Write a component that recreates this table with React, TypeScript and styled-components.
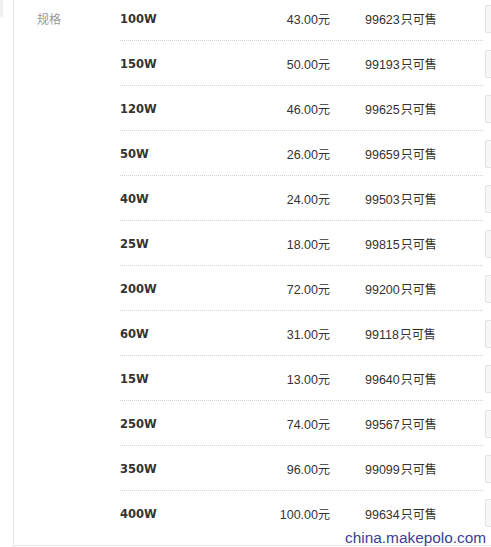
import React from "react";
import styled, { createGlobalStyle } from "styled-components";

const Global = createGlobalStyle`
  html, body { margin: 0; padding: 0; background: #fff; overflow: hidden; }
  body { font-family: "Liberation Sans", "Noto Sans CJK SC", sans-serif; color: #333; }
`;

const Page = styled.div`
  position: relative;
  display: flex;
  align-items: flex-start;
  width: 491px;
  height: 547px;
  overflow: hidden;
`;

const Stub = styled.div`
  width: 3px;
  height: 17px;
  background: #f0f0f0;
  flex: none;
`;

const Panel = styled.div`
  margin-left: 10px;
  margin-top: -4px;
  padding-bottom: 10px;
  display: flex;
  flex: none;
  width: 520px;
  border-left: 1px solid #e6e6e6;
  border-bottom: 1px solid #e6e6e6;
`;

const Label = styled.div`
  width: 83px;
  padding-left: 23px;
  padding-top: 1px;
  height: 43px;
  line-height: 44px;
  font-size: 12px;
  color: #999;
  font-family: "Noto Sans CJK SC", sans-serif;
  flex: none;
`;

const List = styled.div`
  display: flex;
  flex-direction: column;
`;

const Row = styled.div`
  display: flex;
  align-items: center;
`;

const Info = styled.div<{ $last?: boolean }>`
  display: grid;
  grid-template-columns: 130px 80px 153px;
  align-items: center;
  width: 363px;
  height: 44px;
  border-bottom: ${(p) => (p.$last ? "none" : "1px dotted #d6d6d6")};
`;

const Name = styled.span`
  font-family: "DejaVu Sans", sans-serif;
  font-weight: bold;
  font-size: 11.5px;
  color: #333;
  padding-top: 2px;
`;

const Price = styled.span`
  text-align: right;
  font-size: 12.5px;
  color: #333;
`;

const Stock = styled.span`
  padding-left: 35px;
  font-size: 12.5px;
  color: #333;
`;

const Unit = styled.span<{ $gap?: boolean }>`
  font-family: "Noto Sans CJK SC", sans-serif;
  font-size: 12px;
  margin-left: ${(p) => (p.$gap ? "1px" : "0")};
`;

const Box = styled.div`
  margin-left: 2px;
  width: 40px;
  height: 26px;
  border: 1px solid #e3e3e3;
  border-radius: 2px;
  background: #f7f7f7;
  flex: none;
`;

const Watermark = styled.div`
  position: absolute;
  left: 345px;
  top: 530px;
  font-family: "Liberation Sans", sans-serif;
  font-size: 15.4px;
  line-height: 1;
  color: #3b3f98;
  white-space: nowrap;
`;

const items = [
  ["100W", "43.00", "99623"],
  ["150W", "50.00", "99193"],
  ["120W", "46.00", "99625"],
  ["50W", "26.00", "99659"],
  ["40W", "24.00", "99503"],
  ["25W", "18.00", "99815"],
  ["200W", "72.00", "99200"],
  ["60W", "31.00", "99118"],
  ["15W", "13.00", "99640"],
  ["250W", "74.00", "99567"],
  ["350W", "96.00", "99099"],
  ["400W", "100.00", "99634"],
];

export default function App() {
  return (
    <>
      <Global />
      <Page>
        <Stub />
        <Panel>
          <Label>规格</Label>
          <List>
            {items.map(([name, price, stock], i) => (
              <Row key={name}>
                <Info $last={i === items.length - 1}>
                  <Name>{name}</Name>
                  <Price>
                    {price}
                    <Unit>元</Unit>
                  </Price>
                  <Stock>
                    {stock}
                    <Unit $gap>只可售</Unit>
                  </Stock>
                </Info>
                <Box />
              </Row>
            ))}
          </List>
        </Panel>
        <Watermark>china.makepolo.com</Watermark>
      </Page>
    </>
  );
}
